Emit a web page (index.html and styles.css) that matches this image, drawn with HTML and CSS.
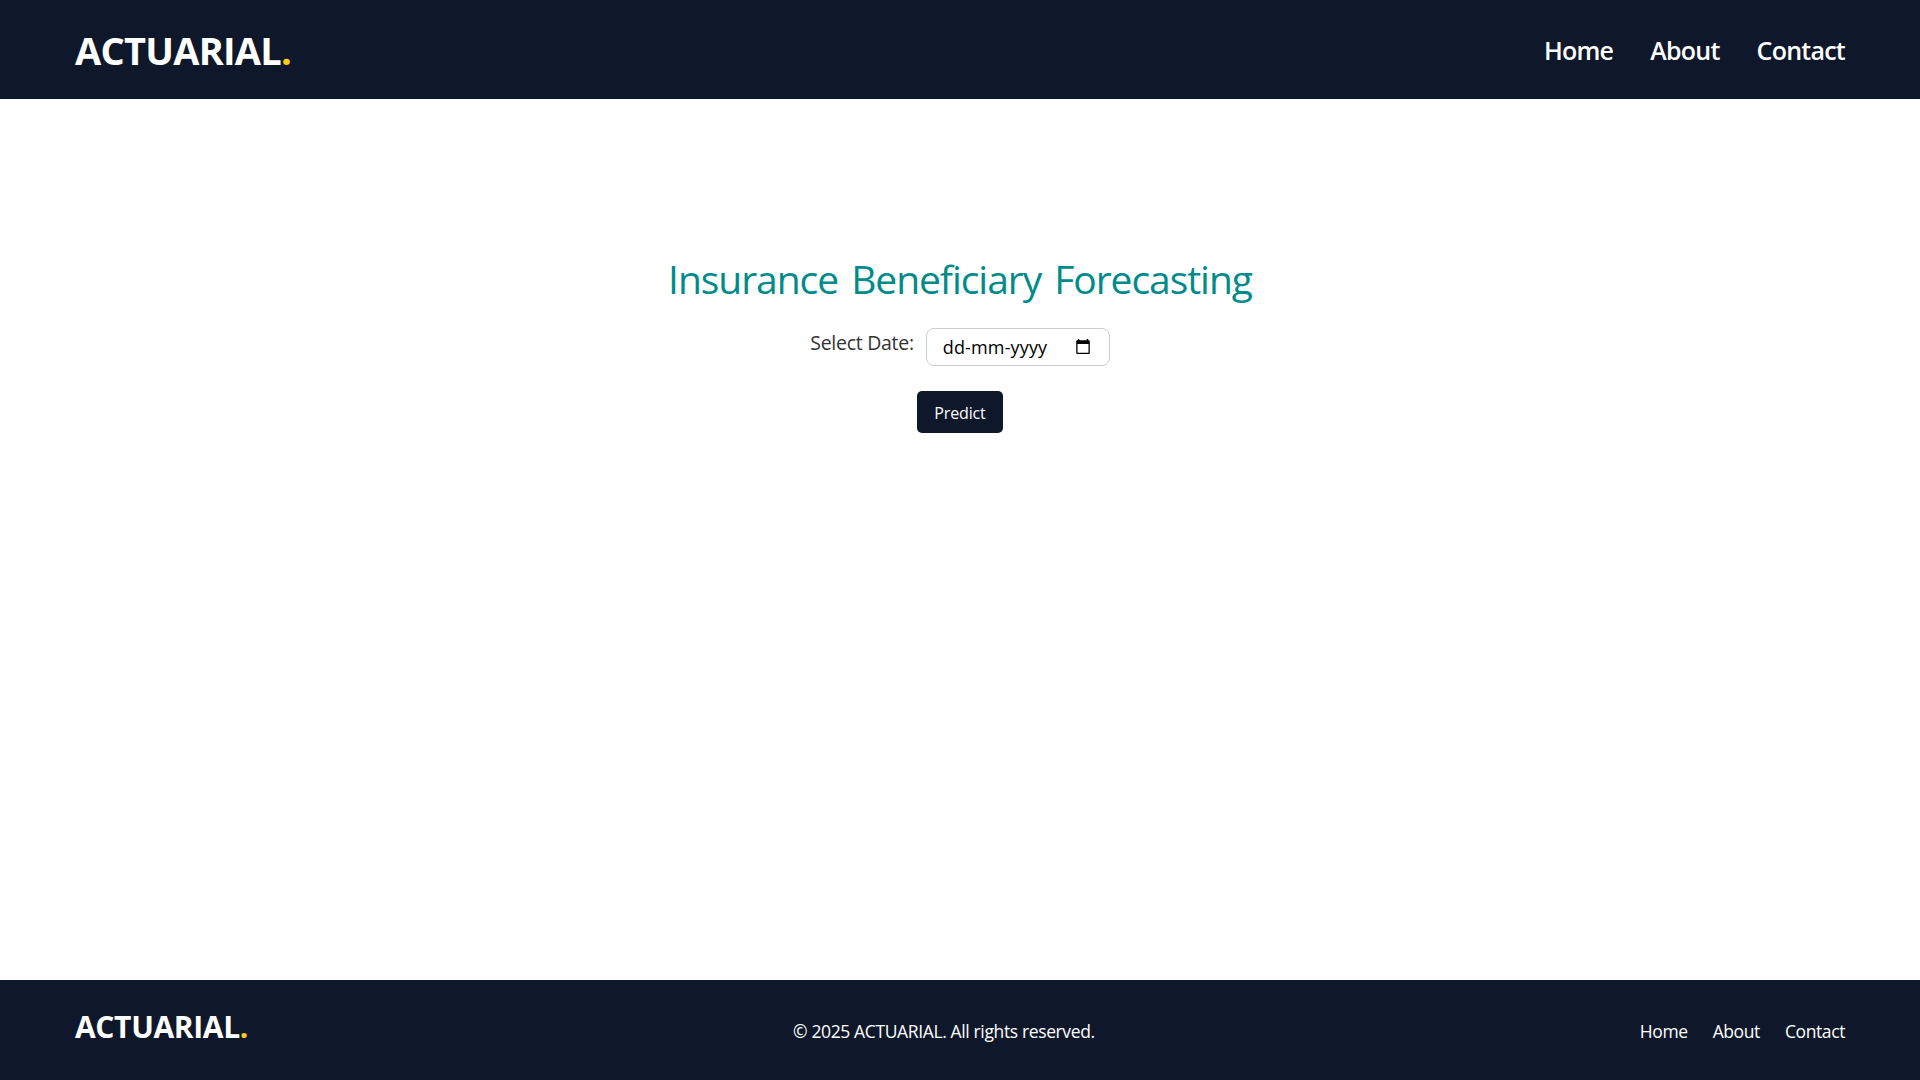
FILE: index.html
```html
<!DOCTYPE html>
<html lang="en">
<head>
<meta charset="utf-8">
<title>Actuarial</title>
<link rel="stylesheet" href="styles.css">
</head>
<body>
<header class="site-header">
  <a class="logo">ACTUARIAL<span class="dot">.</span></a>
  <nav class="nav"><a>Home</a><a>About</a><a>Contact</a></nav>
</header>
<main class="main">
  <h1 class="title">Insurance Beneficiary Forecasting</h1>
  <form class="form">
    <div class="field">
      <label class="label">Select Date:</label>
      <div class="date"><span>dd-mm-yyyy</span>
        <svg class="calendar" width="14" height="15" viewBox="0 0 14 15"><path fill="#000" fill-rule="evenodd" d="M1.800 0h1.500v1.200h7.400V0h1.500v1.200h.6a1 1 0 0 1 1 1V14a1 1 0 0 1-1 1H1.200a1 1 0 0 1-1-1V2.200a1 1 0 0 1 1-1h.6zM1.500 5v8.700h11V5z"/></svg>
      </div>
    </div>
    <button class="predict" type="button">Predict</button>
  </form>
</main>
<footer class="site-footer">
  <a class="footer-logo">ACTUARIAL<span class="dot">.</span></a>
  <p class="copyright">© 2025 ACTUARIAL. All rights reserved.</p>
  <nav class="footer-nav"><a>Home</a><a>About</a><a>Contact</a></nav>
</footer>
</body>
</html>
```
FILE: styles.css
```css
* { box-sizing: border-box; }
body { margin: 0; height: 1080px; display: flex; flex-direction: column; background: #fff; font-family: "Segoe UI", "Open Sans", "Noto Sans", sans-serif; }
.site-header { height: 99px; padding: 0 75px; display: flex; align-items: center; justify-content: space-between; background: #0f172a; color: #fff; }
.logo { font-size: 38px; font-weight: 700; letter-spacing: -0.75px; }
.dot { color: #facc15; }
.nav { display: flex; gap: 37px; font-size: 25px; font-weight: 600; letter-spacing: -0.75px; }
.main { flex: 1; padding-top: 153px; display: flex; flex-direction: column; align-items: center; }
.title { margin: 0; font-size: 39px; line-height: 54px; font-weight: 400; letter-spacing: -1.05px; word-spacing: 4px; color: #008b8b; }
.form { margin-top: 22px; display: flex; flex-direction: column; align-items: center; gap: 25px; }
.field { display: flex; gap: 12px; }
.label { font-size: 19.5px; line-height: 30px; letter-spacing: -0.28px; color: #333; }
.date { width: 184px; height: 38px; padding: 0 19px 0 16px; display: flex; align-items: center; justify-content: space-between; border: 1px solid #ccc; border-radius: 8px; font-size: 18px; letter-spacing: 0.15px; color: #000; }
.calendar { margin-bottom: 2px; }
.predict { width: 86px; height: 42px; padding: 1px 0 0; border: 0; border-radius: 5px; background: #0f172a; color: #fff; font: inherit; font-size: 16px; letter-spacing: -0.15px; }
.site-footer { height: 100px; padding: 2px 75px 0; display: flex; align-items: center; justify-content: space-between; background: #0f172a; color: #fff; font-size: 17.5px; letter-spacing: -0.4px; }
.footer-logo { margin-bottom: 10px; font-size: 30px; font-weight: 700; letter-spacing: -0.35px; }
.copyright { margin: 0; letter-spacing: -0.37px; }
.footer-nav { display: flex; gap: 25px; }
```
